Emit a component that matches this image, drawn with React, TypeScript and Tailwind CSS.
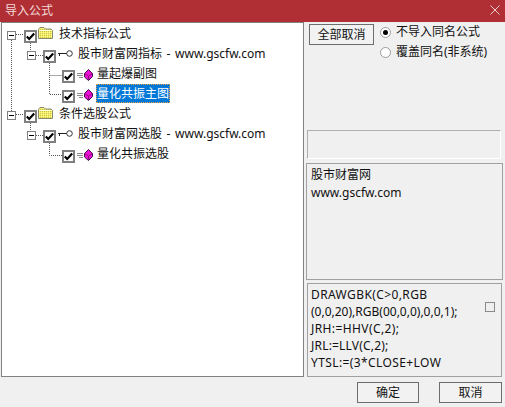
const font = { fontFamily: '"Noto Sans", "Noto Sans CJK SC", sans-serif' };

function Check() {
  return (
    <span className="flex h-[13px] w-[13px] shrink-0 items-center justify-center border-2 border-[#808080] bg-white">
      <svg width="9" height="9" viewBox="0 0 9 9">
        <path d="M0.8 4.5 L3.2 7 L8.2 1.6" fill="none" stroke="#000" strokeWidth="2.2" />
      </svg>
    </span>
  );
}

function Expander() {
  return (
    <span className="flex h-[9px] w-[9px] shrink-0 items-center justify-center border border-[#808080] bg-white">
      <span className="h-px w-[5px] bg-black" />
    </span>
  );
}

function Folder({ id }: { id: string }) {
  return (
    <svg width="15" height="12" viewBox="0 0 15 12" className="shrink-0">
      <defs>
        <pattern id={id} width="2" height="2" patternUnits="userSpaceOnUse">
          <rect width="2" height="2" fill="#f6ee60" />
          <rect width="1" height="1" fill="#c8c050" />
          <rect x="1" y="1" width="1" height="1" fill="#fffb90" />
        </pattern>
      </defs>
      <path d="M0.5 2.5 L2 0.5 H6 L7.5 2 H13 L14.5 3.5 V11.5 H0.5 Z" fill={`url(#${id})`} stroke="#8a8a70" />
      <path d="M1.5 3.5 H13" stroke="#fffde0" />
    </svg>
  );
}

function KeyIcon() {
  return (
    <svg width="15" height="7" viewBox="0 0 15 7" className="shrink-0">
      <path d="M0 3.5 H9 M1.5 3.5 V6" stroke="#222" fill="none" />
      <circle cx="11.5" cy="3.5" r="2.8" fill="#fff" stroke="#333" />
    </svg>
  );
}

function Gem() {
  return (
    <svg width="16" height="12" viewBox="0 0 16 12" className="shrink-0">
      <path d="M0 4.5 H6 M0 6.5 H6 M2 8.5 H6" stroke="#8a8a8a" fill="none" />
      <path d="M11.5 0.5 L15.5 4.5 V7.5 L11.5 11.5 L7.5 8 V4.5 Z" fill="#f010d8" stroke="#3c1048" />
      <path d="M8 4.8 L11.5 7 L15 4.8 M11.5 7 V11" stroke="#8c1080" fill="none" />
    </svg>
  );
}

function Row({ indent, children }: { indent: string; children: React.ReactNode }) {
  return <div className={`flex h-5 items-start leading-5 ${indent}`}>{children}</div>;
}

function Tree() {
  return (
    <div className="relative h-full pt-px">
      {/* connector lines, written in window coordinates */}
      <svg width="100" height="170" className="absolute left-0 top-0">
        <g stroke="#555" strokeDasharray="1 1" fill="none" transform="translate(-2,-23)">
          <path d="M11.5 40 V111" />
          <path d="M16 34.5 H24" />
          <path d="M30.5 43 V51" />
          <path d="M36 55.5 H43" />
          <path d="M49.5 63 V94.5 H62" />
          <path d="M49.5 75.5 H62" />
          <path d="M16 114.5 H24" />
          <path d="M30.5 123 V131" />
          <path d="M36 135.5 H43" />
          <path d="M49.5 143 V155.5 H62" />
        </g>
      </svg>
      <Row indent="pl-[5px]">
        <span className="mt-[7px]"><Expander /></span>
        <span className="ml-2 mt-[6px]"><Check /></span>
        <span className="ml-px mt-[3px]"><Folder id="dither-a" /></span>
        <span className="ml-[6px]">技术指标公式</span>
      </Row>
      <Row indent="pl-[25px]">
        <span className="mt-[7px]"><Expander /></span>
        <span className="ml-[7px] mt-[6px]"><Check /></span>
        <span className="ml-[2px] mt-[6px]"><KeyIcon /></span>
        <span className="ml-[5px] [word-spacing:1.5px]">股市财富网指标 - www.gscfw.com</span>
      </Row>
      <Row indent="pl-[60px]">
        <span className="mt-[6px]"><Check /></span>
        <span className="ml-[2px] mt-[5px]"><Gem /></span>
        <span className="ml-1">量起爆副图</span>
      </Row>
      <Row indent="pl-[60px]">
        <span className="mt-[6px]"><Check /></span>
        <span className="ml-[2px] mt-[5px]"><Gem /></span>
        <span className="ml-[3px] h-[19px] border border-dotted border-[#e8a040] bg-[#0078d7] leading-[17px] text-white">量化共振主图</span>
      </Row>
      <Row indent="pl-[5px]">
        <span className="mt-[7px]"><Expander /></span>
        <span className="ml-2 mt-[6px]"><Check /></span>
        <span className="ml-px mt-[3px]"><Folder id="dither-b" /></span>
        <span className="ml-[6px]">条件选股公式</span>
      </Row>
      <Row indent="pl-[25px]">
        <span className="mt-[7px]"><Expander /></span>
        <span className="ml-[7px] mt-[6px]"><Check /></span>
        <span className="ml-[2px] mt-[6px]"><KeyIcon /></span>
        <span className="ml-[5px] [word-spacing:1.5px]">股市财富网选股 - www.gscfw.com</span>
      </Row>
      <Row indent="pl-[60px]">
        <span className="mt-[6px]"><Check /></span>
        <span className="ml-[2px] mt-[5px]"><Gem /></span>
        <span className="ml-1">量化共振选股</span>
      </Row>
    </div>
  );
}

function Radio({ on, label }: { on?: boolean; label: string }) {
  return (
    <div className="flex h-5 items-center">
      <span className="flex h-[11px] w-[11px] items-center justify-center rounded-full border border-[#9a9a9a] bg-white">
        {on && <span className="h-[5px] w-[5px] rounded-full bg-black" />}
      </span>
      <span className="ml-[5px]">{label}</span>
    </div>
  );
}

export default function App() {
  return (
    <div style={font} className="flex h-[407px] w-[505px] flex-col overflow-hidden bg-[#f0f0f0] text-xs text-[#111]">
      <div className="flex h-[22px] shrink-0 items-center justify-between bg-[#b02f35] pl-[5px] pr-[5px] text-white">
        <span className="text-[#f4dcdc]">导入公式</span>
        <svg width="10" height="10" viewBox="0 0 10 10" className="mb-[3px]">
          <path d="M0.5 0.5 L9.5 9.5 M9.5 0.5 L0.5 9.5" stroke="#eed0d0" />
        </svg>
      </div>
      <div className="flex h-[356px] shrink-0 gap-[2px] pl-[1px]">
        <div className="h-[355px] w-[303px] shrink-0 border border-[#828282] bg-white">
          <Tree />
        </div>
        <div className="flex h-[355px] w-[198px] flex-col">
          <div className="flex h-[108px] shrink-0 items-start gap-[6px] pl-[3px] pt-[2px]">
            <button className="h-[21px] w-[65px] border border-[#6d6d6d] bg-[#f2f2f2]">全部取消</button>
            <div className="-mt-[2px]">
              <Radio on label="不导入同名公式" />
              <Radio label="覆盖同名(非系统)" />
            </div>
          </div>
          <div className="ml-px h-[29px] w-[194px] shrink-0 border border-[#aeaeae] border-b-white border-r-white" />
          <div className="mt-[4px] h-[117px] w-[197px] shrink-0 border border-[#a0a0a0] px-[4px] pt-[2px] leading-[18px]">
            <div>股市财富网</div>
            <div>www.gscfw.com</div>
          </div>
          <div className="relative ml-px mt-[3px] w-[195px] flex-1 border border-[#a0a0a0] px-[3px] pt-[2px] leading-[17px]">
            <div className="tracking-[0.4px]">DRAWGBK(C&gt;0,RGB</div>
            <div>(0,0,20),RGB(00,0,0),0,0,1);</div>
            <div className="tracking-[0.4px]">JRH:=HHV(C,2);</div>
            <div className="tracking-[0.2px]">JRL:=LLV(C,2);</div>
            <div className="tracking-[0.4px]">YTSL:=(3*CLOSE+LOW</div>
            <span className="absolute right-[6px] top-[18px] h-[10px] w-[10px] border border-[#8a8a8a] bg-[#f0f0f0]" />
          </div>
        </div>
      </div>
      <div className="flex h-[29px] shrink-0 items-start justify-end gap-[20px] pr-[3px] pt-[4px]">
        <button className="h-[21px] w-[62px] border border-[#6d6d6d] bg-[#f2f2f2]">确定</button>
        <button className="h-[21px] w-[63px] border border-[#6d6d6d] bg-[#f2f2f2]">取消</button>
      </div>
    </div>
  );
}
